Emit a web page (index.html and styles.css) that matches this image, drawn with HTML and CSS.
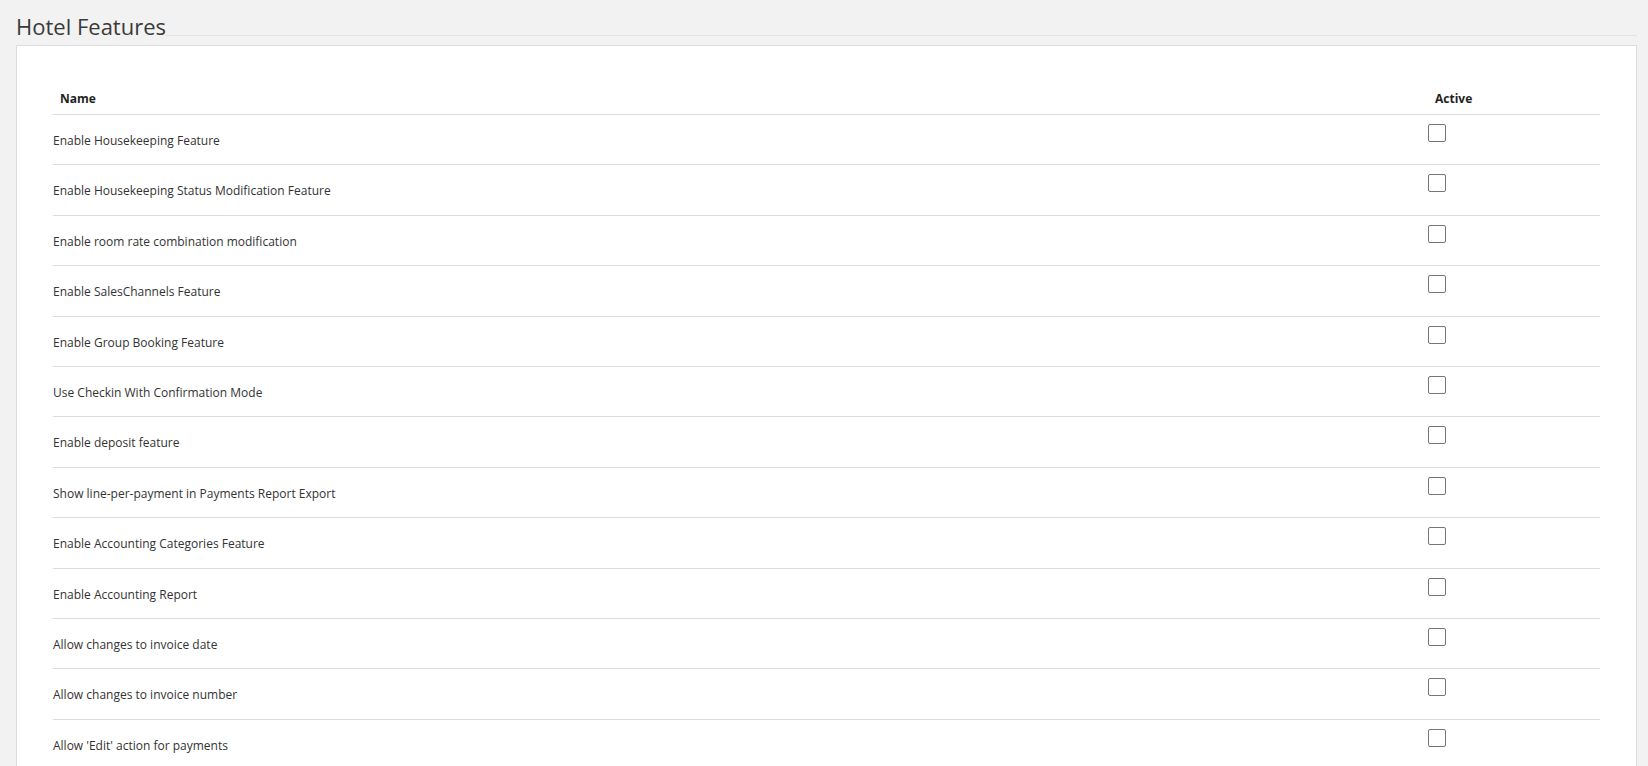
FILE: index.html
```html
<!DOCTYPE html>
<html lang="en">
<head>
<meta charset="utf-8">
<title>Hotel Features</title>
<link rel="stylesheet" href="styles.css">
</head>
<body>
<div class="page">
  <div class="page-header">
    <h1 class="page-title">Hotel Features</h1>
    <div class="page-rule"></div>
  </div>
  <div class="panel">
    <table class="features">
      <thead>
        <tr><th class="col-name">Name</th><th class="col-active">Active</th></tr>
      </thead>
      <tbody>
        <tr><td class="cell-name">Enable Housekeeping Feature</td><td class="cell-active"><span class="check"></span></td></tr>
        <tr><td class="cell-name">Enable Housekeeping Status Modification Feature</td><td class="cell-active"><span class="check"></span></td></tr>
        <tr><td class="cell-name">Enable room rate combination modification</td><td class="cell-active"><span class="check"></span></td></tr>
        <tr><td class="cell-name">Enable SalesChannels Feature</td><td class="cell-active"><span class="check"></span></td></tr>
        <tr><td class="cell-name">Enable Group Booking Feature</td><td class="cell-active"><span class="check"></span></td></tr>
        <tr><td class="cell-name">Use Checkin With Confirmation Mode</td><td class="cell-active"><span class="check"></span></td></tr>
        <tr><td class="cell-name">Enable deposit feature</td><td class="cell-active"><span class="check"></span></td></tr>
        <tr><td class="cell-name">Show line-per-payment in Payments Report Export</td><td class="cell-active"><span class="check"></span></td></tr>
        <tr><td class="cell-name">Enable Accounting Categories Feature</td><td class="cell-active"><span class="check"></span></td></tr>
        <tr><td class="cell-name">Enable Accounting Report</td><td class="cell-active"><span class="check"></span></td></tr>
        <tr><td class="cell-name">Allow changes to invoice date</td><td class="cell-active"><span class="check"></span></td></tr>
        <tr><td class="cell-name">Allow changes to invoice number</td><td class="cell-active"><span class="check"></span></td></tr>
        <tr><td class="cell-name">Allow 'Edit' action for payments</td><td class="cell-active"><span class="check"></span></td></tr>
      </tbody>
    </table>
  </div>
</div>
</body>
</html>
```
FILE: styles.css
```css
html, body {
  margin: 0;
  padding: 0;
  background: #f2f2f2;
  height: 100%;
  overflow: hidden;
}

body {
  font-family: "Open Sans", "Noto Sans", sans-serif;
  color: #333;
}

.page {
  padding: 0 11px 0 16px;
}

.page-header {
  display: flex;
  align-items: flex-start;
  height: 45px;
}

.page-title {
  margin: 0;
  padding-top: 12px;
  font-size: 22px;
  line-height: 28px;
  font-weight: 400;
  color: #3a3a3a;
  white-space: nowrap;
}

.page-rule {
  flex: 1;
  margin-top: 35px;
  border-top: 1px solid #e3e3e3;
}

.panel {
  background: #fff;
  border: 1px solid #dcdcdc;
  padding: 43px 36px 0 36px;
  min-height: 800px;
}

.features {
  width: 100%;
  border-collapse: collapse;
  font-size: 12px;
}

.features th {
  text-align: left;
  font-weight: 700;
  color: #1f1f1f;
  padding: 0 8px 5px 7px;
  line-height: 20px;
  height: 20px;
}

.features thead tr {
  border-bottom: 1px solid #dcdcdc;
}

.col-active {
  width: 157px;
}

.features tbody tr {
  border-top: 1px solid #dcdcdc;
  height: 50.4px;
}

.features tbody tr:first-child {
  border-top: none;
}

.features td {
  padding: 0;
  vertical-align: top;
}

.cell-name {
  padding-top: 17px !important;
  line-height: 18px;
  color: #333;
}

.cell-active {
  padding-top: 9px !important;
}

.check {
  display: block;
  width: 16px;
  height: 16px;
  border: 1px solid #767676;
  border-radius: 2px;
  background: #fff;
}
```
